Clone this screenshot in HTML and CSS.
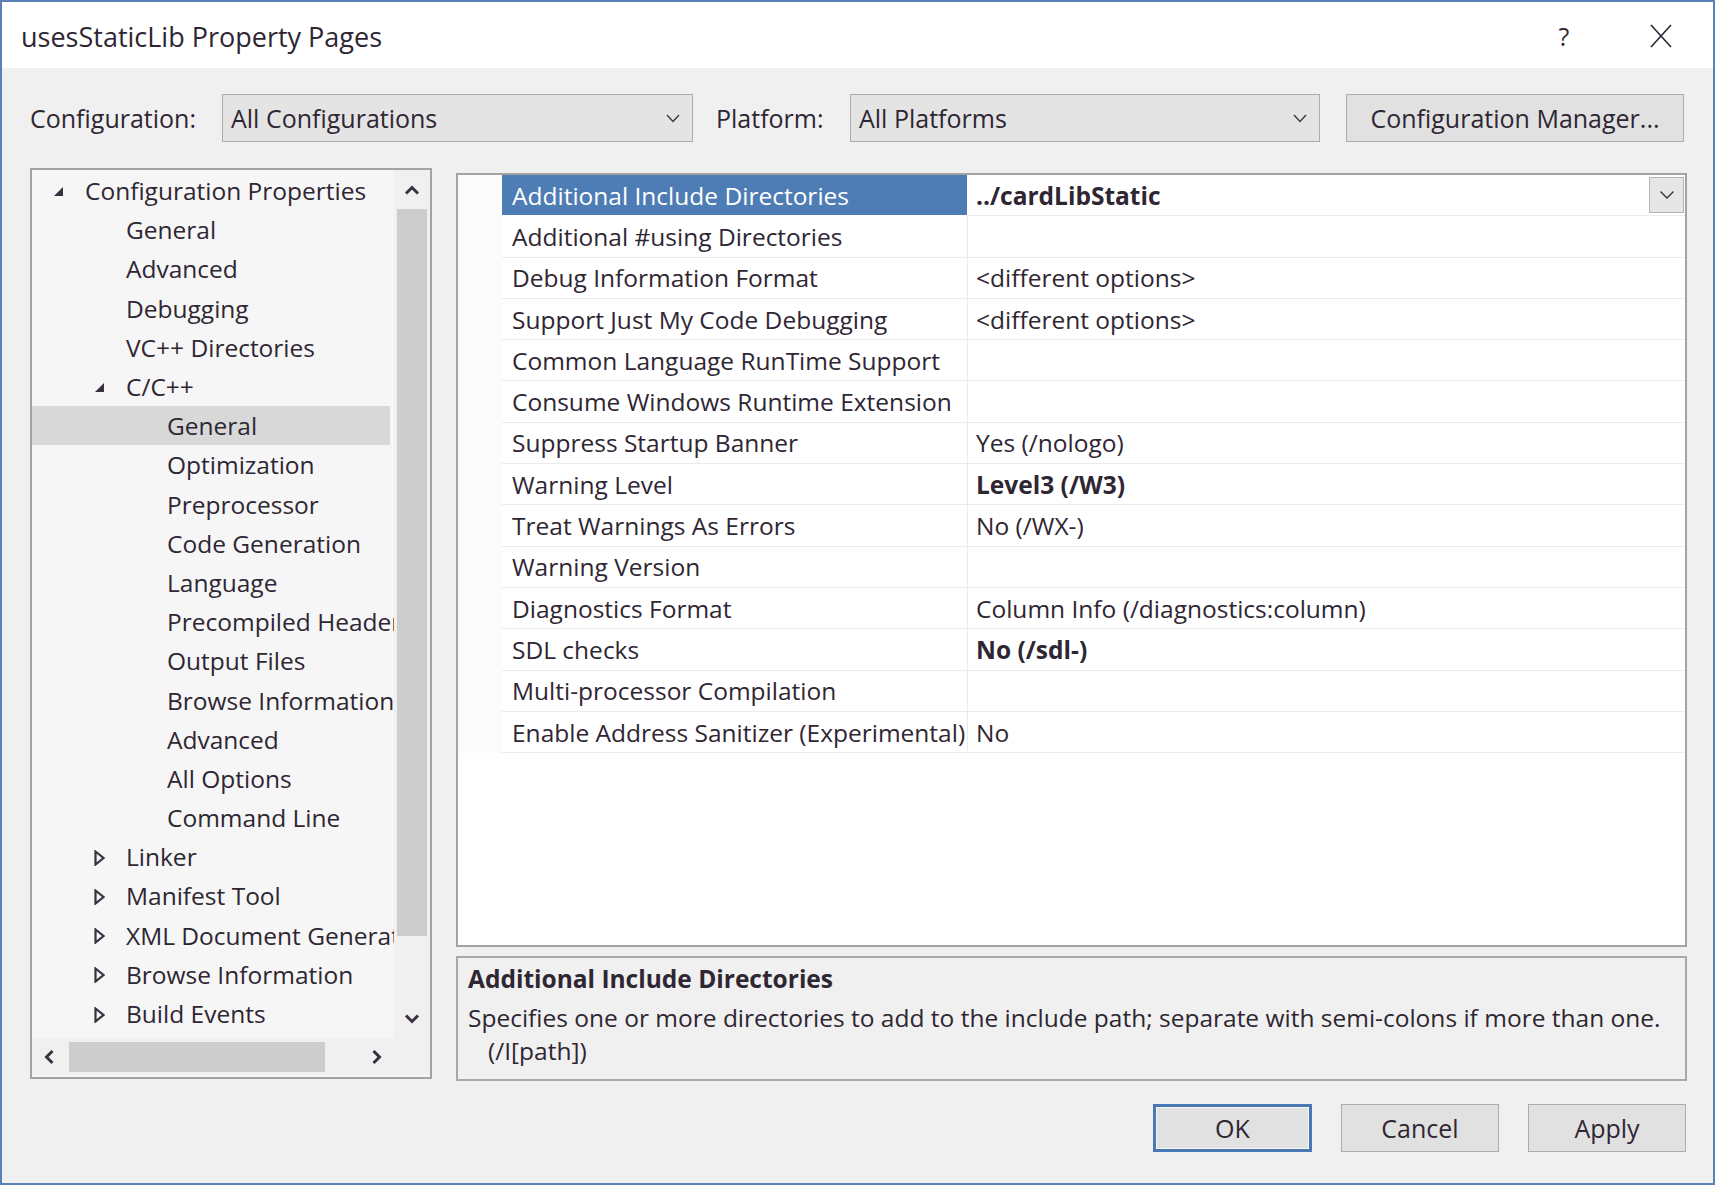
FILE: index.html
```html
<!DOCTYPE html>
<html>
<head>
<meta charset="utf-8">
<link rel="stylesheet" href="styles.css">
</head>
<body>
<div class="window">
  <div class="titlebar">
    <span class="title">usesStaticLib Property Pages</span>
    <span class="help">?</span>
    <span class="close"><svg width="24" height="24" viewBox="0 0 24 24"><path d="M2 1 L22 23 M22 1 L2 23" stroke="#2f2633" stroke-width="1.6" fill="none"/></svg></span>
  </div>
  <div class="toolbar">
    <span class="lbl lbl-config">Configuration:</span>
    <div class="combo combo-config"><span>All Configurations</span><svg class="chev" width="14" height="9" viewBox="0 0 14 9"><path d="M1 1 L7 7.5 L13 1" stroke="#3a3a3a" stroke-width="1.4" fill="none"/></svg></div>
    <span class="lbl lbl-platform">Platform:</span>
    <div class="combo combo-platform"><span>All Platforms</span><svg class="chev" width="14" height="9" viewBox="0 0 14 9"><path d="M1 1 L7 7.5 L13 1" stroke="#3a3a3a" stroke-width="1.4" fill="none"/></svg></div>
    <div class="btn btn-cm">Configuration Manager...</div>
  </div>
  <div class="main">
    <div class="tree">
      <div class="tree-content">
        <div class="trow l1"><span class="tw"><svg width="11" height="11" viewBox="0 0 11 11"><path d="M10 1 L10 10 L1 10 Z" fill="#3a3040"/></svg></span><span>Configuration Properties</span></div>
        <div class="trow l2"><span class="tw"></span><span>General</span></div>
        <div class="trow l2"><span class="tw"></span><span>Advanced</span></div>
        <div class="trow l2"><span class="tw"></span><span>Debugging</span></div>
        <div class="trow l2"><span class="tw"></span><span>VC++ Directories</span></div>
        <div class="trow l2"><span class="tw"><svg width="11" height="11" viewBox="0 0 11 11"><path d="M10 1 L10 10 L1 10 Z" fill="#3a3040"/></svg></span><span>C/C++</span></div>
        <div class="trow l3 sel"><span class="tw"></span><span>General</span></div>
        <div class="trow l3"><span class="tw"></span><span>Optimization</span></div>
        <div class="trow l3"><span class="tw"></span><span>Preprocessor</span></div>
        <div class="trow l3"><span class="tw"></span><span>Code Generation</span></div>
        <div class="trow l3"><span class="tw"></span><span>Language</span></div>
        <div class="trow l3"><span class="tw"></span><span>Precompiled Headers</span></div>
        <div class="trow l3"><span class="tw"></span><span>Output Files</span></div>
        <div class="trow l3"><span class="tw"></span><span>Browse Information</span></div>
        <div class="trow l3"><span class="tw"></span><span>Advanced</span></div>
        <div class="trow l3"><span class="tw"></span><span>All Options</span></div>
        <div class="trow l3"><span class="tw"></span><span>Command Line</span></div>
        <div class="trow l2"><span class="tw"><svg width="11" height="16" viewBox="0 0 11 16"><path d="M1.5 1.5 L9.5 8 L1.5 14.5 Z" stroke="#3a3040" stroke-width="2.2" fill="none"/></svg></span><span>Linker</span></div>
        <div class="trow l2"><span class="tw"><svg width="11" height="16" viewBox="0 0 11 16"><path d="M1.5 1.5 L9.5 8 L1.5 14.5 Z" stroke="#3a3040" stroke-width="2.2" fill="none"/></svg></span><span>Manifest Tool</span></div>
        <div class="trow l2"><span class="tw"><svg width="11" height="16" viewBox="0 0 11 16"><path d="M1.5 1.5 L9.5 8 L1.5 14.5 Z" stroke="#3a3040" stroke-width="2.2" fill="none"/></svg></span><span>XML Document Generator</span></div>
        <div class="trow l2"><span class="tw"><svg width="11" height="16" viewBox="0 0 11 16"><path d="M1.5 1.5 L9.5 8 L1.5 14.5 Z" stroke="#3a3040" stroke-width="2.2" fill="none"/></svg></span><span>Browse Information</span></div>
        <div class="trow l2"><span class="tw"><svg width="11" height="16" viewBox="0 0 11 16"><path d="M1.5 1.5 L9.5 8 L1.5 14.5 Z" stroke="#3a3040" stroke-width="2.2" fill="none"/></svg></span><span>Build Events</span></div>
      </div>
      <div class="vscroll">
        <div class="sarrow"><svg width="16" height="10" viewBox="0 0 16 10"><path d="M2 8.5 L8 2.5 L14 8.5" stroke="#3a3040" stroke-width="3" fill="none"/></svg></div>
        <div class="vthumb"></div>
        <div class="vtrack"></div>
        <div class="sarrow"><svg width="16" height="10" viewBox="0 0 16 10"><path d="M2 1.5 L8 7.5 L14 1.5" stroke="#3a3040" stroke-width="3" fill="none"/></svg></div>
      </div>
      <div class="hscroll">
        <div class="harrow"><svg width="10" height="16" viewBox="0 0 10 16"><path d="M8.5 2 L2.5 8 L8.5 14" stroke="#3a3040" stroke-width="3" fill="none"/></svg></div>
        <div class="hthumb"></div>
        <div class="htrack"></div>
        <div class="harrow"><svg width="10" height="16" viewBox="0 0 10 16"><path d="M1.5 2 L7.5 8 L1.5 14" stroke="#3a3040" stroke-width="3" fill="none"/></svg></div>
      </div>
      <div class="corner"></div>
    </div>
    <div class="right">
      <div class="grid">
        <div class="grow"><span class="gut"></span><span class="name selname">Additional Include Directories</span><span class="val bold"><span class="vtext">../cardLibStatic</span><span class="ddbtn"><svg width="16" height="10" viewBox="0 0 16 10"><path d="M1.5 1.5 L8 8 L14.5 1.5" stroke="#3a3040" stroke-width="1.4" fill="none"/></svg></span></span></div>
        <div class="grow"><span class="gut"></span><span class="name">Additional #using Directories</span><span class="val"></span></div>
        <div class="grow"><span class="gut"></span><span class="name">Debug Information Format</span><span class="val">&lt;different options&gt;</span></div>
        <div class="grow"><span class="gut"></span><span class="name">Support Just My Code Debugging</span><span class="val">&lt;different options&gt;</span></div>
        <div class="grow"><span class="gut"></span><span class="name">Common Language RunTime Support</span><span class="val"></span></div>
        <div class="grow"><span class="gut"></span><span class="name">Consume Windows Runtime Extension</span><span class="val"></span></div>
        <div class="grow"><span class="gut"></span><span class="name">Suppress Startup Banner</span><span class="val">Yes (/nologo)</span></div>
        <div class="grow"><span class="gut"></span><span class="name">Warning Level</span><span class="val bold">Level3 (/W3)</span></div>
        <div class="grow"><span class="gut"></span><span class="name">Treat Warnings As Errors</span><span class="val">No (/WX-)</span></div>
        <div class="grow"><span class="gut"></span><span class="name">Warning Version</span><span class="val"></span></div>
        <div class="grow"><span class="gut"></span><span class="name">Diagnostics Format</span><span class="val">Column Info (/diagnostics:column)</span></div>
        <div class="grow"><span class="gut"></span><span class="name">SDL checks</span><span class="val bold">No (/sdl-)</span></div>
        <div class="grow"><span class="gut"></span><span class="name">Multi-processor Compilation</span><span class="val"></span></div>
        <div class="grow"><span class="gut"></span><span class="name">Enable Address Sanitizer (Experimental)</span><span class="val">No</span></div>
      </div>
      <div class="desc">
        <div class="desc-title">Additional Include Directories</div>
        <div class="desc-line">Specifies one or more directories to add to the include path; separate with semi-colons if more than one.</div>
        <div class="desc-line indent">(/I[path])</div>
      </div>
    </div>
  </div>
  <div class="footer">
    <div class="btn btn-ok">OK</div>
    <div class="btn btn-std">Cancel</div>
    <div class="btn btn-std">Apply</div>
  </div>
</div>
</body>
</html>
```
FILE: styles.css
```css
* { box-sizing: border-box; }
html, body { margin: 0; padding: 0; }
body {
  width: 1715px;
  height: 1185px;
  overflow: hidden;
  background: #f0f0f0;
  font-family: "Open Sans", "Noto Sans", sans-serif;
  font-size: 24.5px;
  color: #2f2633;
}
.window {
  width: 1715px;
  height: 1185px;
  border: 2px solid #5a82b8;
  background: #f0f0f0;
  display: flex;
  flex-direction: column;
}
.titlebar {
  flex: none;
  height: 66px;
  background: #ffffff;
  display: flex;
  align-items: center;
  padding-left: 19px;
  padding-top: 2px;
}
.title { flex: 1; font-size: 27px; }
.help { width: 24px; text-align: center; font-size: 25px; margin-right: 73px; }
.close { width: 24px; height: 24px; margin-right: 40px; display: flex; }

.toolbar {
  flex: none;
  margin-top: 26px;
  height: 48px;
  display: flex;
  align-items: center;
  padding-left: 28px;
  font-size: 25px;
}
.lbl-config { width: 192px; }
.lbl-platform { width: 134px; margin-left: 23px; }
.combo {
  height: 48px;
  background: #e4e4e4;
  border: 1px solid #acacac;
  display: flex;
  align-items: center;
  justify-content: space-between;
  padding-left: 8px;
  padding-right: 12px;
}
.combo-config { width: 471px; }
.combo-platform { width: 470px; }
.btn {
  height: 48px;
  background: #e1e1e1;
  border: 1px solid #adadad;
  display: flex;
  align-items: center;
  justify-content: center;
}
.btn-cm { width: 338px; margin-left: 26px; }

.main {
  flex: none;
  height: 913px;
  margin-top: 26px;
  padding-left: 28px;
  display: flex;
  gap: 24px;
}
.tree {
  width: 402px;
  height: 911px;
  border: 2px solid #a3a3a3;
  background: #f6f6f6;
  display: grid;
  grid-template-columns: 362px 36px;
  grid-template-rows: 868px 37px;
}
.tree-content {
  overflow: hidden;
  padding-top: 1px;
}
.trow {
  height: 39.2px;
  display: flex;
  align-items: center;
  white-space: nowrap;
}
.trow.l1 { padding-left: 12px; }
.trow.l2 { padding-left: 53px; }
.trow.l3 { padding-left: 94px; }
.trow.sel { background: #d8d8d8; margin-right: 4px; }
.tw {
  width: 41px;
  flex: none;
  padding-left: 9px;
  display: flex;
  align-items: center;
  padding-top: 2px;
}
.vscroll {
  background: #f0f0f0;
  display: flex;
  flex-direction: column;
  align-items: center;
}
.sarrow { height: 39px; width: 100%; display: flex; align-items: center; justify-content: center; flex: none; }
.vthumb { width: 30px; height: 727px; background: #cdcdcd; flex: none; }
.vtrack { flex: 1; }
.hscroll {
  background: #f0f0f0;
  display: flex;
  align-items: center;
}
.harrow { width: 34px; height: 100%; display: flex; align-items: center; justify-content: center; flex: none; }
.hthumb { width: 256px; height: 30px; background: #cdcdcd; margin-left: 3px; flex: none; }
.htrack { flex: 1; }
.corner { background: #f0f0f0; }

.right {
  width: 1231px;
  display: flex;
  flex-direction: column;
}
.grid {
  margin-top: 5px;
  height: 774px;
  border: 2px solid #a3a3a3;
  background: #ffffff;
  flex: none;
}
.grow {
  height: 41.3px;
  display: grid;
  grid-template-columns: 44px 466px 1fr;
}
.gut { background: #fbfbfb; }
.name {
  display: flex;
  align-items: center;
  padding-left: 10px;
  border-bottom: 1px solid #ebebeb;
  border-right: 1px solid #ebebeb;
  white-space: nowrap;
  overflow: hidden;
}
.selname { background: #4e7cb4; color: #ffffff; border-color: #ffffff; }
.val {
  display: flex;
  align-items: center;
  padding-left: 8px;
  border-bottom: 1px solid #ebebeb;
  white-space: nowrap;
}
.bold { font-weight: 700; }
.vtext { flex: 1; }
.ddbtn {
  width: 35px;
  height: 36px;
  background: #e6e6e6;
  border: 1px solid #b4b4b4;
  display: flex;
  align-items: center;
  justify-content: center;
  margin-right: 1px;
  font-weight: 400;
}
.desc {
  margin-top: 9px;
  height: 125px;
  border: 2px solid #a8a8a8;
  padding: 3px 10px 0 10px;
  flex: none;
}
.desc-title { font-weight: 700; line-height: 36px; }
.desc-line { line-height: 33px; white-space: nowrap; }
.desc-title + .desc-line { margin-top: 4px; }
.desc-line.indent { padding-left: 20px; }

.footer {
  flex: none;
  margin-top: 23px;
  display: flex;
  justify-content: flex-end;
  gap: 29px;
  padding-right: 27px;
  font-size: 25px;
}
.btn-ok { width: 159px; border: 3px solid #4a78b4; box-shadow: inset 0 0 0 1px #f4f4f4; }
.btn-std { width: 158px; }
```
